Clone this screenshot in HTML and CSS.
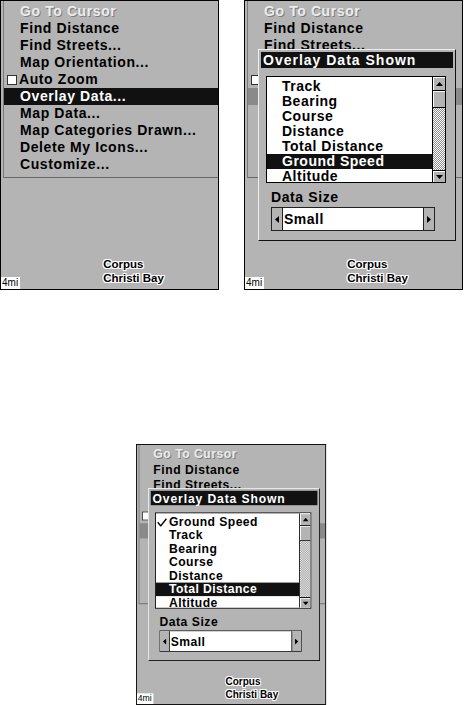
FILE: index.html
```html
<!DOCTYPE html>
<html>
<head>
<meta charset="utf-8">
<link rel="stylesheet" href="styles.css">
</head>
<body>
<div class="top-row">
  <div class="screen">
    <div class="menu">
      <div class="item disabled">Go To Cursor</div>
      <div class="item">Find Distance</div>
      <div class="item">Find Streets...</div>
      <div class="item">Map Orientation...</div>
      <div class="item check"><span class="box"></span>Auto Zoom</div>
      <div class="item sel">Overlay Data...</div>
      <div class="item">Map Data...</div>
      <div class="item">Map Categories Drawn...</div>
      <div class="item">Delete My Icons...</div>
      <div class="item">Customize...</div>
    </div>
    <div class="map">
      <span class="scale">4mi</span>
      <span class="label">Corpus<br>Christi Bay</span>
    </div>
  </div>

  <div class="screen">
    <div class="menu">
      <div class="item disabled">Go To Cursor</div>
      <div class="item">Find Distance</div>
      <div class="item">Find Streets...</div>
      <div class="item">Map Orientation...</div>
      <div class="item check"><span class="box"></span>Auto Zoom</div>
      <div class="item sel-dim">Overlay Data...</div>
      <div class="item">Map Data...</div>
      <div class="item">Map Categories Drawn...</div>
      <div class="item">Delete My Icons...</div>
      <div class="item">Customize...</div>
    </div>
    <div class="map">
      <span class="scale">4mi</span>
      <span class="label">Corpus<br>Christi Bay</span>
    </div>
    <div class="dialog">
      <div class="title">Overlay Data Shown</div>
      <div class="list">
        <div class="rows">
          <div class="row">Track</div>
          <div class="row">Bearing</div>
          <div class="row">Course</div>
          <div class="row">Distance</div>
          <div class="row">Total Distance</div>
          <div class="row on">Ground Speed</div>
          <div class="row">Altitude</div>
        </div>
        <div class="scrollbar">
          <div class="sb-btn up"><svg width="7" height="4" viewBox="0 0 7 4"><polygon points="3.5,0 7,4 0,4" fill="#000"/></svg></div>
          <div class="thumb"></div>
          <div class="track"></div>
          <div class="sb-btn down"><svg width="7" height="4" viewBox="0 0 7 4"><polygon points="0,0 7,0 3.5,4" fill="#000"/></svg></div>
        </div>
      </div>
      <div class="field-label">Data Size</div>
      <div class="select">
        <span class="arr left"><svg width="4" height="7" viewBox="0 0 4 7"><polygon points="4,0 4,7 0,3.5" fill="#000"/></svg></span>
        <span class="value">Small</span>
        <span class="arr right"><svg width="4" height="7" viewBox="0 0 4 7"><polygon points="0,0 4,3.5 0,7" fill="#000"/></svg></span>
      </div>
    </div>
  </div>
</div>

<div class="bottom-row">
  <div class="scaled">
    <div class="screen">
      <div class="menu">
        <div class="item disabled">Go To Cursor</div>
        <div class="item">Find Distance</div>
        <div class="item">Find Streets...</div>
        <div class="item">Map Orientation...</div>
        <div class="item check"><span class="box"></span>Auto Zoom</div>
        <div class="item sel-dim">Overlay Data...</div>
        <div class="item">Map Data...</div>
        <div class="item">Map Categories Drawn...</div>
        <div class="item">Delete My Icons...</div>
        <div class="item">Customize...</div>
      </div>
      <div class="map">
        <span class="scale">4mi</span>
        <span class="label">Corpus<br>Christi Bay</span>
      </div>
      <div class="dialog">
        <div class="title">Overlay Data Shown</div>
        <div class="list">
          <div class="rows">
            <div class="row checked"><svg class="tick" width="12" height="10" viewBox="0 0 12 10"><polyline points="1,5 4.5,9 11,1" fill="none" stroke="#000" stroke-width="1.6"/></svg>Ground Speed</div>
            <div class="row">Track</div>
            <div class="row">Bearing</div>
            <div class="row">Course</div>
            <div class="row">Distance</div>
            <div class="row on">Total Distance</div>
            <div class="row">Altitude</div>
          </div>
          <div class="scrollbar">
            <div class="sb-btn up"><svg width="7" height="4" viewBox="0 0 7 4"><polygon points="3.5,0 7,4 0,4" fill="#000"/></svg></div>
            <div class="thumb"></div>
            <div class="track"></div>
            <div class="sb-btn down"><svg width="7" height="4" viewBox="0 0 7 4"><polygon points="0,0 7,0 3.5,4" fill="#000"/></svg></div>
          </div>
        </div>
        <div class="field-label">Data Size</div>
        <div class="select">
          <span class="arr left"><svg width="4" height="7" viewBox="0 0 4 7"><polygon points="4,0 4,7 0,3.5" fill="#000"/></svg></span>
          <span class="value">Small</span>
          <span class="arr right"><svg width="4" height="7" viewBox="0 0 4 7"><polygon points="0,0 4,3.5 0,7" fill="#000"/></svg></span>
        </div>
      </div>
    </div>
  </div>
</div>
</body>
</html>
```

FILE: styles.css
```css
html, body {
  margin: 0;
  background: #fff;
}
body {
  font-family: "Liberation Sans", Arial, sans-serif;
  overflow: hidden;
  width: 464px;
  height: 705px;
}

.top-row {
  display: flex;
  gap: 25px;
}

.bottom-row {
  margin-top: 154px;
  padding-left: 136px;
}

.scaled {
  width: 190px;
  height: 261px;
}
.scaled .screen {
  transform: scale(0.868, 0.9);
  transform-origin: 0 0;
}

.screen {
  width: 217px;
  height: 288px;
  border: 1px solid #000;
  background: #b4b4b4;
  position: relative;
  display: flex;
  flex-direction: column;
  overflow: hidden;
  flex: none;
}

/* menu */
.menu {
  margin-left: 2px;
  border-left: 1px solid #7a7a7a;
  border-bottom: 1px solid #6a6a6a;
  padding: 2px 0 4px;
}
.item {
  height: 17px;
  line-height: 17px;
  padding-left: 16px;
  font-size: 14px;
  font-weight: bold;
  letter-spacing: 0.6px;
  color: #000;
  white-space: nowrap;
}
.item.disabled {
  color: #ececec;
  text-shadow: 1px 1px 0 #7c7c7c;
}
.item.check {
  display: flex;
  align-items: center;
  gap: 2px;
  padding-left: 3px;
}
.box {
  width: 8px;
  height: 8px;
  border: 1px solid #333;
  background: #fff;
  flex: none;
}
.item.sel {
  background: #111;
  color: #fff;
}
.item.sel-dim {
  background: #8a8a8a;
}

/* map */
.map {
  flex: 1;
  display: flex;
  align-items: flex-end;
}
.scale {
  font-size: 10px;
  line-height: 12px;
  background: #fff;
  padding: 0 2px 0 1px;
  color: #000;
}
.label {
  margin-left: 83px;
  margin-bottom: 4px;
  font-size: 11.5px;
  font-weight: bold;
  line-height: 14px;
  color: #000;
  text-shadow: -1px 0 #fff, 1px 0 #fff, 0 -1px #fff, 0 1px #fff,
    1px 1px #fff, -1px -1px #fff, 1px -1px #fff, -1px 1px #fff;
}

/* dialog overlay */
.dialog {
  position: absolute;
  left: 13px;
  top: 48px;
  width: 198px;
  height: 192px;
  box-sizing: border-box;
  background: #b4b4b4;
  border: 1px solid;
  border-color: #eeeeee #111 #111 #eeeeee;
  padding: 2px;
  display: flex;
  flex-direction: column;
}
.title {
  height: 16px;
  line-height: 16px;
  background: #111;
  color: #fff;
  font-size: 14px;
  font-weight: bold;
  letter-spacing: 1px;
  padding-left: 2px;
  white-space: nowrap;
}
.list {
  margin: 8px 7px 0 5px;
  height: 107px;
  box-sizing: border-box;
  border: 1px solid #000;
  background: #fff;
  display: flex;
  overflow: hidden;
}
.rows {
  flex: 1;
  padding-top: 2px;
  overflow: hidden;
}
.row {
  height: 15px;
  line-height: 15px;
  padding-left: 15px;
  font-size: 14px;
  font-weight: bold;
  letter-spacing: 0.5px;
  color: #000;
  white-space: nowrap;
}
.row.on {
  background: #111;
  color: #fff;
}
.row.checked {
  padding-left: 1px;
  display: flex;
  align-items: center;
}
.tick {
  margin-right: 2px;
  flex: none;
}
.scrollbar {
  width: 12px;
  display: flex;
  flex-direction: column;
  border-left: 1px solid #000;
  flex: none;
}
.sb-btn {
  display: flex;
  align-items: center;
  justify-content: center;
  background: #b4b4b4;
  box-sizing: border-box;
  border-bottom: 1px solid #000;
  box-shadow: inset 1px 1px 0 #fff;
}
.sb-btn.up {
  height: 14px;
}
.sb-btn.down {
  height: 12px;
  border-bottom: none;
  border-top: 1px solid #000;
}
.thumb {
  height: 17px;
  box-sizing: border-box;
  background: #b4b4b4;
  border-bottom: 1px solid #000;
  box-shadow: inset 1px 1px 0 #fff;
}
.track {
  flex: 1;
  background: repeating-conic-gradient(#ffffff 0 25%, #8c8c8c 0 50%) 0 0 / 2px 2px;
}

.field-label {
  margin-top: 6px;
  height: 17px;
  line-height: 17px;
  padding-left: 10px;
  font-size: 14px;
  font-weight: bold;
  letter-spacing: 0.6px;
  color: #000;
}
.select {
  margin: 1px 18px 0 10px;
  height: 24px;
  box-sizing: border-box;
  border: 1px solid #222;
  background: #fff;
  display: flex;
}
.arr {
  width: 10px;
  background: #b4b4b4;
  display: flex;
  align-items: center;
  justify-content: center;
  flex: none;
}
.arr.left {
  border-right: 1px solid #222;
}
.arr.right {
  border-left: 1px solid #222;
}
.value {
  flex: 1;
  padding-left: 1px;
  line-height: 22px;
  font-size: 14px;
  font-weight: bold;
  letter-spacing: 0.5px;
  color: #000;
}
```
